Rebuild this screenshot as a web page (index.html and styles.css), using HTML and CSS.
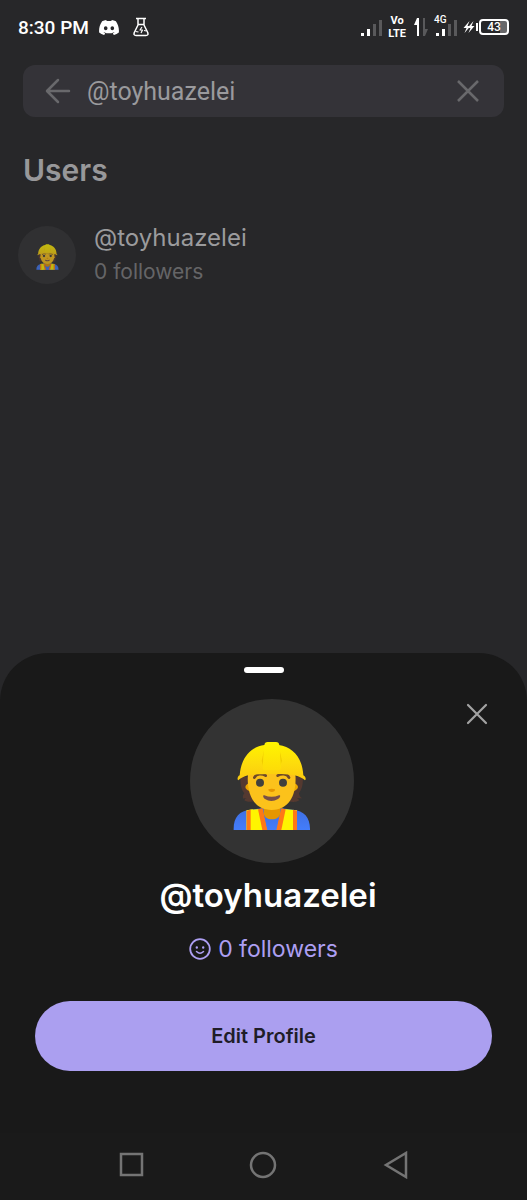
FILE: index.html
```html
<!DOCTYPE html>
<html lang="en">
<head>
    <meta charset="UTF-8">
    <meta name="viewport" content="width=device-width, initial-scale=1.0">
    <title>Search users</title>
    <link rel="stylesheet" href="styles.css">
</head>
<body>
    <!-- shared drawing for both avatars -->
    <svg class="defs" aria-hidden="true">
        <defs>
            <linearGradient id="hatFill" x1="0" y1="0" x2="0" y2="1">
                <stop offset="0" stop-color="#fff000"/>
                <stop offset="0.5" stop-color="#fddd0c"/>
                <stop offset="1" stop-color="#fbc90e"/>
            </linearGradient>
            <linearGradient id="ridgeFill" x1="0" y1="0" x2="0" y2="1">
                <stop offset="0" stop-color="#fff500"/>
                <stop offset="1" stop-color="#fddc08"/>
            </linearGradient>
            <linearGradient id="shirtFill" x1="0" y1="0" x2="0" y2="1">
                <stop offset="0" stop-color="#3f6ee0"/>
                <stop offset="1" stop-color="#437dfb"/>
            </linearGradient>
        </defs>
        <symbol id="worker" viewBox="58 34 234 268">
            <path d="M80 140C80 164 82 176 92 190C86 196 88 204 88 206C94 204 98 204 100 203C92 208 92 211 92 211C108 220 126 214 138 206L210 206C222 216 244 220 257 211C256 208 252 206 249 203C254 205 260 205 265 205C258 200 256 194 256 190C266 176 269 160 267 140Z" fill="#543930"/>
            <path d="M60 300C59 262 76 242 112 239L145 235L204 235L237 239C272 242 290 262 289 300Z" fill="url(#shirtFill)"/>
            <path d="M99 241L117 238L134 300H99Z" fill="#fff500"/>
            <path d="M99 241L145 236L152 300H99Z" fill="#fff500"/>
            <path d="M250 241L204 236L197 300H250Z" fill="#fff500"/>
            <path d="M99 242L111 239V300H99Z" fill="#ff7816"/>
            <path d="M238 239L250 242V300H238Z" fill="#ff7816"/>
            <path d="M133 238L148 235L162 300H146Z" fill="#ff7816"/>
            <path d="M201 235L216 238L203 300H187Z" fill="#ff7816"/>
            <path d="M147 236L161 300H188L202 236Z" fill="url(#shirtFill)"/>
            <path d="M150 232V246C150 261 160 268 175 268C190 268 200 261 200 246V232Z" fill="#e59600"/>
            <ellipse cx="174" cy="171" rx="79" ry="23" fill="#eda600"/>
            <path d="M103 130C98 188 117 240 174 240C231 240 250 188 245 130Z" fill="#fcc21b"/>
            <path d="M122 143C128 130 146 130 156 137M192 137C202 130 220 130 226 143" fill="none" stroke="#6d4928" stroke-width="8" stroke-linecap="round"/>
            <circle cx="139" cy="158" r="12" fill="#41403d"/>
            <circle cx="208" cy="158" r="12" fill="#41403d"/>
            <path d="M164 178Q174 174 184 178C186 189 163 189 164 178Z" fill="#e59600"/>
            <path d="M152 196Q174 205 196 196C202 194 200 203 193 207C180 215 166 215 154 207C147 202 147 194 152 196Z" fill="#795046"/>
            <path d="M74 151C70 149 71 139 78 136C82 83 111 51 152 45H195C237 51 266 82 269 136C276 139 278 148 274 151C267 145 257 139 243 136C218 131 129 131 103 136C90 139 80 145 74 151Z" fill="url(#hatFill)"/>
            <path d="M151 62L144 92L148 107ZM198 62L205 92L200 107Z" fill="#f0cc00"/>
            <path d="M152 46Q153 36 162 36H187Q196 36 197 46L202 113Q202 120 195 120H154Q146 120 147 113Z" fill="url(#ridgeFill)"/>
        </symbol>
    </svg>

    <div class="screen">
        <header class="status-bar">
            <div class="status-left">
                <span class="clock">8:30 PM</span>
                <svg width="20" height="15" viewBox="0 0 127 96" fill="#fff" role="img" aria-label="Discord">
                    <path d="M107.7 8.1A105 105 0 0 0 81.5 0a72 72 0 0 0-3.4 6.8 98 98 0 0 0-29.1 0A72 72 0 0 0 45.6 0a106 106 0 0 0-26.2 8.1C2.8 32.7-1.7 56.6.5 80.2a106 106 0 0 0 32.2 16.2 78 78 0 0 0 6.9-11.2 69 69 0 0 1-10.9-5.2l2.7-2.1a76 76 0 0 0 64.3 0l2.7 2.1a69 69 0 0 1-10.9 5.2 77 77 0 0 0 6.9 11.2 106 106 0 0 0 32.2-16.2c2.6-27.4-4.5-51.1-18.9-72.1ZM42.5 65.7c-6.3 0-11.5-5.8-11.5-12.8s5-12.8 11.5-12.8S54 46 53.900 52.900s-5.100 12.800-11.400 12.800Zm42.300 0c-6.300 0-11.500-5.800-11.500-12.800s5-12.800 11.500-12.800 11.500 5.800 11.400 12.800-5 12.800-11.400 12.800Z"/>
                </svg>
                <svg class="flask" width="16" height="20" viewBox="0 0 16 20" fill="none" stroke="#fff" stroke-width="1.5" stroke-linejoin="round" role="img" aria-label="Flask">
                    <path d="M3 1.5H13M5 2V8L1.3 15.5Q.3 18.5 3 18.5H13Q15.7 18.5 14.7 15.5L11 8V2M5 7.5H11"/>
                    <path d="M9 10L7 13H9.5L8 16M2.500 14.500L5.500 15M11 13.500L13.500 14" stroke-width="1.2"/>
                </svg>
            </div>
            <div class="status-right">
                <svg width="21" height="17" viewBox="0 0 21 17" role="img" aria-label="Signal">
                    <path d="M0 14H3V17H0ZM6 10H9V17H6Z" fill="#fff"/>
                    <path d="M12 5H15V17H12ZM18 1H21V17H18Z" fill="#59595b"/>
                </svg>
                <span class="volte"><span>Vo</span><span>LTE</span></span>
                <svg class="data" width="14" height="18" viewBox="0 0 14 18" role="img" aria-label="Data">
                    <path d="M0 7L3 0H5V18H3V7Z" fill="#fff"/>
                    <path d="M9 0H11V11H14L11 18H9Z" fill="#59595b"/>
                </svg>
                <span class="mobile">
                    <span class="network">4G</span>
                    <svg width="21" height="17" viewBox="0 0 21 17" role="img" aria-label="Mobile signal">
                        <path d="M0 14H3V17H0ZM6 10H9V17H6Z" fill="#fff"/>
                        <path d="M12 5H15V17H12ZM18 1H21V17H18Z" fill="#59595b"/>
                    </svg>
                </span>
                <span class="power">
                    <svg width="12" height="12" viewBox="0 0 11 12" fill="#fff" aria-hidden="true">
                        <path d="M6 0L0 7H3L1 12L7 5H4ZM10 0L4 7H7L5 12L11 5H8Z"/>
                    </svg>
                    <span class="terminal"></span>
                    <span class="battery">43</span>
                </span>
            </div>
        </header>

        <main class="results">
            <form class="search">
                <button class="icon-button" type="button" aria-label="Back">
                    <svg width="26" height="26" viewBox="0 0 26 26" fill="none" stroke="currentColor" stroke-width="2.5" stroke-linecap="round" stroke-linejoin="round">
                        <path d="M24 13H3M13 2L2 13L13 24"/>
                    </svg>
                </button>
                <input class="search-input" type="text" aria-label="Search users" value="@toyhuazelei">
                <button class="icon-button" type="reset" aria-label="Clear">
                    <svg width="26" height="26" viewBox="0 0 26 26" stroke="currentColor" stroke-width="2.5">
                        <path d="M2 3L22 23M22 3L2 23"/>
                    </svg>
                </button>
            </form>
            <h1 class="heading">Users</h1>
            <a class="user" href="#profile">
                <span class="avatar avatar-small">
                    <svg width="23" height="26" aria-hidden="true"><use href="#worker"/></svg>
                </span>
                <span class="user-info">
                    <span class="user-name">@toyhuazelei</span>
                    <span class="user-followers">0 followers</span>
                </span>
            </a>
        </main>

        <section class="sheet" id="profile">
            <div class="handle"></div>
            <div class="sheet-top">
                <div class="avatar avatar-large">
                    <svg width="78" height="90" aria-hidden="true"><use href="#worker"/></svg>
                </div>
                <button class="close" type="button" aria-label="Close">
                    <svg width="22" height="22" viewBox="0 0 22 22" stroke="currentColor" stroke-width="2.2" stroke-linecap="round">
                        <path d="M2 2L20 20M20 2L2 20"/>
                    </svg>
                </button>
            </div>
            <h2 class="profile-name">@toyhuazelei</h2>
            <p class="profile-followers">
                <svg width="22" height="22" viewBox="0 0 22 22" fill="none" stroke="currentColor" stroke-width="1.8" stroke-linecap="round" aria-hidden="true">
                    <circle cx="11" cy="11" r="9.8"/>
                    <path d="M7.500 13.500Q11 17 14.500 13.500" stroke-width="1.500"/>
                    <path d="M7.800 9.500V9.600M14.200 9.500V9.600" stroke-width="2.400"/>
                </svg>
                0 followers
            </p>
            <button class="edit" type="button">Edit Profile</button>
        </section>

        <nav class="nav-bar">
            <button type="button" aria-label="Recent apps">
                <svg width="28" height="28" viewBox="0 0 28 28"><rect x="3" y="3" width="21" height="21"/></svg>
            </button>
            <button type="button" aria-label="Home">
                <svg width="28" height="28" viewBox="0 0 28 28"><circle cx="14" cy="14" r="12"/></svg>
            </button>
            <button type="button" aria-label="Back">
                <svg width="28" height="28" viewBox="0 0 28 28"><path d="M25 2V26L5 14Z"/></svg>
            </button>
        </nav>
    </div>
</body>
</html>
```
FILE: styles.css
```css
* {
    box-sizing: border-box;
    margin: 0;
    padding: 0;
}

body {
    background-color: #272729;
    color: #fff;
    font-family: Inter, sans-serif;
}
button {
    display: flex;
    align-items: center;
    justify-content: center;
    background: none;
    border: 0;
    font-family: inherit;
    cursor: pointer;
}
svg {
    display: block;
    flex-shrink: 0;
}
.defs {
    position: absolute;
    width: 0;
    height: 0;
}
.screen {
    display: flex;
    flex-direction: column;
    min-height: 100vh;
}

/* Status bar */
.status-bar {
    display: flex;
    align-items: center;
    justify-content: space-between;
    height: 54px;
    padding: 0 18px;
    font-family: Roboto, sans-serif;
}
.status-left,
.status-right {
    display: flex;
    align-items: center;
}
.status-left {
    gap: 10px;
}
.flask {
    margin-left: 4px;
}
.clock {
    font-size: 19px;
    font-weight: 500;
}
.status-right {
    gap: 6px;
}
.volte {
    display: flex;
    flex-direction: column;
    align-items: center;
    font-size: 11px;
    font-weight: 700;
    line-height: 13px;
}
.data {
    margin: 0 2px;
}
.mobile {
    position: relative;
}
.network {
    position: absolute;
    top: -4px;
    left: -2px;
    font-size: 10px;
    font-weight: 500;
    line-height: 10px;
}
.power {
    display: flex;
    align-items: center;
    gap: 1px;
}
.terminal {
    width: 2px;
    height: 8px;
    background-color: #fff;
}
.battery {
    width: 30px;
    height: 16px;
    border: 2px solid #fff;
    border-radius: 4px;
    background: linear-gradient(to right, transparent 75%, #68686a 75%);
    font-size: 12px;
    font-weight: 500;
    line-height: 12px;
    text-align: center;
}

/* Search results */
.results {
    flex: 1;
    padding: 11px 23px 0;
}
.search {
    display: flex;
    align-items: center;
    height: 52px;
    padding: 0 22px;
    border-radius: 12px;
    background-color: #343338;
}
.icon-button {
    color: #69696c;
}
.search-input {
    flex: 1;
    min-width: 0;
    padding: 0 16px;
    border: 0;
    outline: 0;
    background: none;
    color: #9a9a9d;
    font-family: Roboto, sans-serif;
    font-size: 25px;
}
.heading {
    margin-top: 35px;
    color: #98989a;
    font-size: 30px;
    font-weight: 600;
    line-height: 36px;
}
.user {
    display: flex;
    align-items: center;
    gap: 18px;
    margin: 33px 0 0 -5px;
    color: #9b9b9d;
    text-decoration: none;
}
.avatar {
    display: flex;
    align-items: center;
    justify-content: center;
    border-radius: 50%;
    background-color: #333333;
}
.avatar-small {
    width: 58px;
    height: 58px;
    padding-top: 3px;
    background-color: #303032;
}
.avatar-small svg {
    opacity: 0.7;
}
.user-info {
    display: flex;
    flex-direction: column;
}
.user-name {
    font-size: 24px;
    line-height: 34px;
}
.user-followers {
    color: #656567;
    font-size: 21px;
    line-height: 34px;
}

/* Profile sheet */
.sheet {
    padding: 14px 35px 62px;
    border-radius: 48px 48px 0 0;
    background-color: #191919;
}
.handle {
    width: 40px;
    height: 6px;
    margin: 0 auto;
    border-radius: 3px;
    background-color: #fff;
}
.sheet-top {
    display: grid;
    grid-template-columns: 1fr auto 1fr;
    margin-top: 26px;
    padding-left: 17px;
}
.avatar-large {
    grid-column: 2;
    width: 164px;
    height: 164px;
    padding-top: 9px;
}
.close {
    align-self: start;
    justify-self: end;
    width: 30px;
    height: 30px;
    color: #a3a3a3;
}
.profile-name {
    margin-top: 12px;
    padding-left: 9px;
    font-size: 33px;
    font-weight: 600;
    line-height: 40px;
    text-align: center;
}
.profile-followers {
    display: flex;
    align-items: center;
    justify-content: center;
    gap: 7px;
    margin-top: 16px;
    color: #ad9ff2;
    font-size: 23px;
    line-height: 36px;
}
.edit {
    width: 100%;
    height: 70px;
    margin-top: 34px;
    border-radius: 35px;
    background-color: #ab9ff0;
    color: #201d28;
    font-size: 20px;
    font-weight: 600;
}

/* System navigation */
.nav-bar {
    display: grid;
    grid-template-columns: repeat(3, 1fr);
    height: 67px;
    padding: 0 66px 4px;
    background-color: #1a1a1a;
}
.nav-bar svg {
    fill: none;
    stroke: #747474;
    stroke-width: 2.5px;
}
```
